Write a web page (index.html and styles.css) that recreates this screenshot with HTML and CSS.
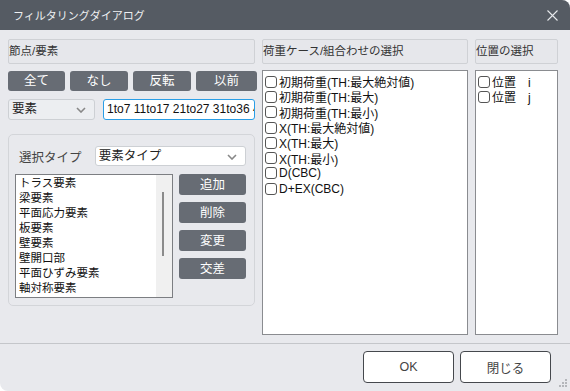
FILE: index.html
```html
<!DOCTYPE html>
<html lang="ja">
<head>
    <meta charset="UTF-8">
    <title>フィルタリングダイアログ</title>
    <link rel="stylesheet" href="styles.css">
</head>
<body>

    <div class="dialog">
        <!-- Title bar -->
        <div class="titlebar">
            <span class="title">フィルタリングダイアログ</span>
            <svg class="close" width="11" height="11" viewBox="0 0 11 11"><path d="M0.5 0.5 L10.5 10.5 M10.5 0.5 L0.5 10.5" stroke="#e6e8eb" stroke-width="1.1"/></svg>
        </div>

        <div class="content">
            <!-- Nodes / elements -->
            <div class="col col-left">
                <div class="head">節点/要素</div>
                <div class="btn-row">
                    <button class="dark-btn">全て</button>
                    <button class="dark-btn">なし</button>
                    <button class="dark-btn">反転</button>
                    <button class="dark-btn">以前</button>
                </div>
                <div class="pick-row">
                    <div class="select small">要素
                        <svg class="chev" width="10" height="6" viewBox="0 0 10 6"><path d="M1 1 L5 5 L9 1" fill="none" stroke="#888" stroke-width="1.6"/></svg>
                    </div>
                    <div class="text-input">1to7 11to17 21to27 31to36 41to47</div>
                </div>
                <div class="group">
                    <div class="type-row">
                        <span class="type-label">選択タイプ</span>
                        <div class="select wide">要素タイプ
                            <svg class="chev" width="10" height="6" viewBox="0 0 10 6"><path d="M1 1 L5 5 L9 1" fill="none" stroke="#888" stroke-width="1.6"/></svg>
                        </div>
                    </div>
                    <div class="list-row">
                        <div class="listbox">
                            <div class="items">
                                <div>トラス要素</div>
                                <div>梁要素</div>
                                <div>平面応力要素</div>
                                <div>板要素</div>
                                <div>壁要素</div>
                                <div>壁開口部</div>
                                <div>平面ひずみ要素</div>
                                <div>軸対称要素</div>
                                <div>ソリッド要素</div>
                            </div>
                            <div class="scrollbar"><div class="thumb"></div></div>
                        </div>
                        <div class="side-btns">
                            <button class="dark-btn">追加</button>
                            <button class="dark-btn">削除</button>
                            <button class="dark-btn">変更</button>
                            <button class="dark-btn">交差</button>
                        </div>
                    </div>
                </div>
            </div>

            <!-- Load cases -->
            <div class="col col-mid">
                <div class="head">荷重ケース/組合わせの選択</div>
                <div class="checklist">
                    <label><span class="box"></span>初期荷重(TH:最大絶対値)</label>
                    <label><span class="box"></span>初期荷重(TH:最大)</label>
                    <label><span class="box"></span>初期荷重(TH:最小)</label>
                    <label><span class="box"></span>X(TH:最大絶対値)</label>
                    <label><span class="box"></span>X(TH:最大)</label>
                    <label><span class="box"></span>X(TH:最小)</label>
                    <label><span class="box"></span>D(CBC)</label>
                    <label><span class="box"></span>D+EX(CBC)</label>
                </div>
            </div>

            <!-- Position -->
            <div class="col col-right">
                <div class="head">位置の選択</div>
                <div class="checklist">
                    <label><span class="box"></span>位置　i</label>
                    <label><span class="box"></span>位置　j</label>
                </div>
            </div>
        </div>

        <!-- Footer -->
        <div class="footer">
            <button class="light-btn">OK</button>
            <button class="light-btn">閉じる</button>
            <svg class="grip" width="8" height="8" viewBox="0 0 8 8" fill="#b4b6ba">
                <rect x="6" y="0" width="2" height="2"/><rect x="3" y="3" width="2" height="2"/><rect x="6" y="3" width="2" height="2"/>
                <rect x="0" y="6" width="2" height="2"/><rect x="3" y="6" width="2" height="2"/><rect x="6" y="6" width="2" height="2"/>
            </svg>
        </div>
    </div>

</body>
</html>
```

FILE: styles.css
```css
/* General */
* { margin: 0; padding: 0; box-sizing: border-box; }
body { background: #fff; font-family: "Liberation Sans", "Noto Sans CJK JP", sans-serif; font-size: 12px; color: #222; }

.dialog { width: 570px; height: 391px; background: #e8e9ed; border-radius: 0 8px 0 8px; overflow: hidden;
    display: flex; flex-direction: column; }

/* Title bar */
.titlebar { height: 30px; background: #555b63; display: flex; align-items: center; justify-content: space-between;
    padding: 0 12px 0 13px; }
.title { color: #eef0f2; font-size: 11px; }
.close { margin-top: 1px; }

/* Columns */
.content { height: 313px; display: flex; gap: 7px; padding: 9px 12px 0 8px; }
.col { display: flex; flex-direction: column; }
.col-left { width: 247px; }
.col-mid { width: 206px; }
.col-right { width: 83px; }

.head { height: 25px; border: 1px solid #cfd1d5; border-radius: 2px; background: #e6e7eb; line-height: 22px;
    font-size: 11.5px; color: #333; white-space: nowrap; overflow: hidden; }

/* Dark buttons */
.dark-btn { background: #676c74; color: #fff; border: none; border-radius: 3px; font-family: inherit;
    font-size: 12.5px; height: 20px; line-height: 20px; }
.btn-row { display: grid; grid-template-columns: 57px 58px 58px 61px; gap: 0 5px; margin-top: 7px; }

/* Select + input row */
.pick-row { display: flex; gap: 8px; margin-top: 8px; }
.select { position: relative; height: 21px; border: 1px solid #cdd0d4; border-radius: 3px; background: #eceef1;
    padding-left: 3px; line-height: 19px; font-size: 12.5px; color: #222; }
.select.small { width: 87px; }
.select.wide { width: 152px; background: #fff; height: 20px; line-height: 18px; }
.chev { position: absolute; right: 8px; top: 7px; }
.text-input { flex: 1; height: 21px; border: 1.5px solid #2a9ee6; border-radius: 3px; background: #fff;
    padding-left: 3px; line-height: 18px; font-size: 12px; white-space: nowrap; overflow: hidden; color: #111; }

/* Group box */
.group { margin-top: 14px; height: 172px; border: 1px solid #d3d5d9; border-radius: 5px; padding: 11px 8px 0 6px; }
.type-row { display: flex; align-items: center; }
.type-label { width: 80px; padding-left: 4px; font-size: 12.5px; color: #444; }
.list-row { display: flex; gap: 6px; margin-top: 8px; }
.listbox { width: 161px; height: 124px; border: 1px solid #7c7e82; background: #fff; display: flex; overflow: hidden; }
.items { flex: 1; padding: 1px 0 0 3px; font-size: 11.5px; line-height: 15px; color: #111; }
.scrollbar { width: 16px; background: #f0f0f0; padding: 17px 0 0 6px; }
.thumb { width: 2px; height: 64px; background: #8b8b8b; }
.side-btns { display: flex; flex-direction: column; gap: 7px; }
.side-btns .dark-btn { width: 67px; height: 21px; }

/* Check lists */
.checklist { flex: 1; margin-top: 6px; margin-bottom: 8px; background: #fff; border: 1px solid #8a8c90;
    padding: 3px 0 0 2px; }
.checklist label { display: flex; align-items: center; height: 15.3px; font-size: 12px; color: #111; white-space: nowrap; }
.box { width: 12px; height: 12px; border: 1px solid #555; border-radius: 3px; margin-right: 2px; background: #fff; }

/* Footer */
.footer { flex: 1; border-top: 1.5px solid #c4c6ca; position: relative; display: flex; justify-content: flex-end;
    gap: 6px; padding: 7px 19px 0 0; }
.light-btn { width: 91px; height: 32px; background: #fff; border: 1px solid #45484d; border-radius: 4px;
    font-family: inherit; font-size: 12.5px; color: #444; }
.grip { position: absolute; right: 3px; bottom: 4px; }
```
